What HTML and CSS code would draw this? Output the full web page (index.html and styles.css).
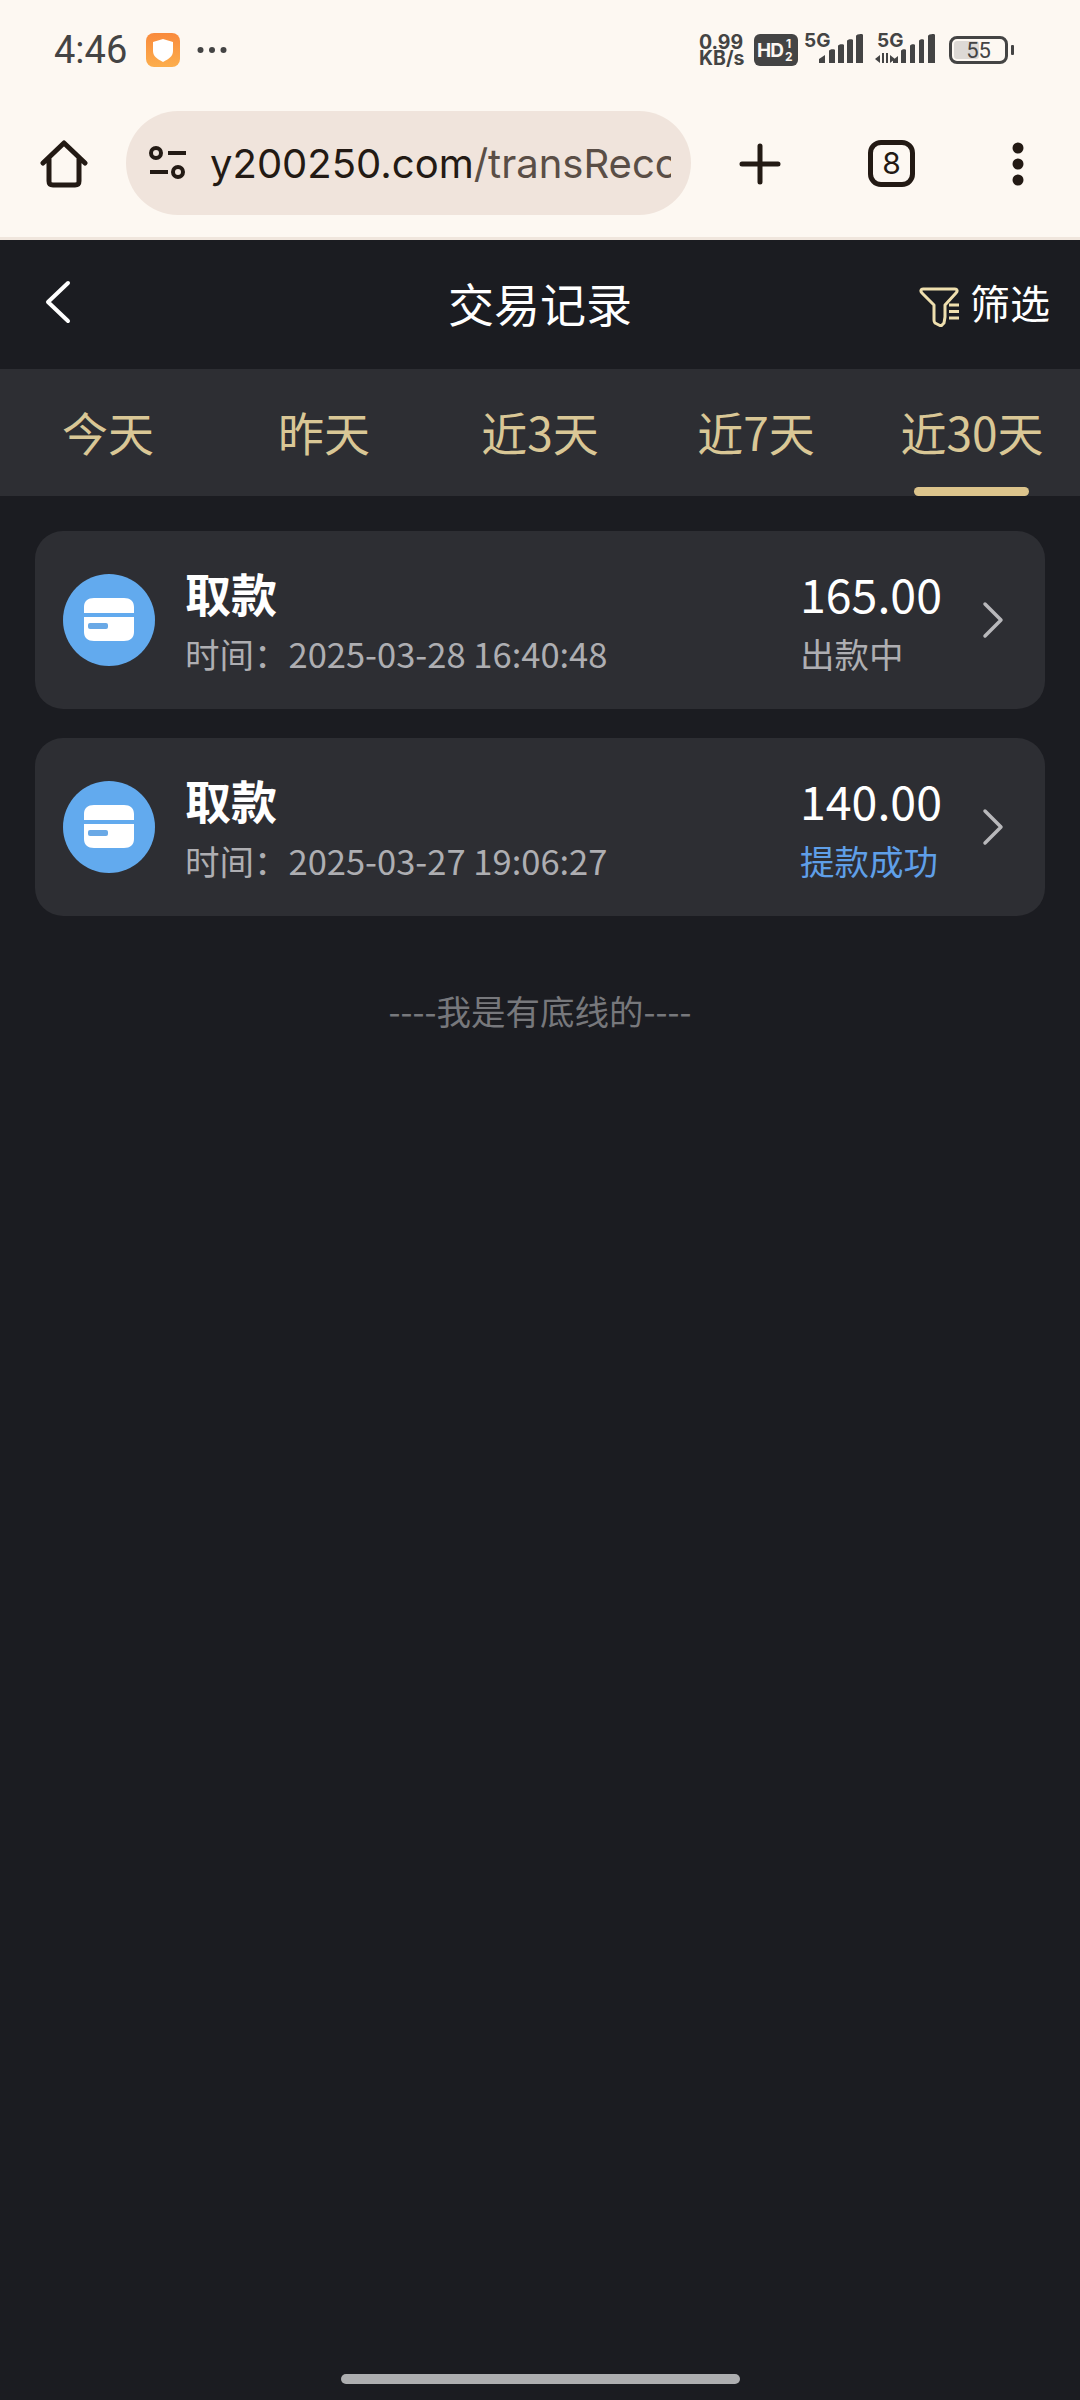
FILE: index.html
```html
<!DOCTYPE html>
<html>
<head lang="zh-CN">
	<meta charset="UTF-8">
	<title>交易记录</title>
	<link rel="stylesheet" href="styles.css">
</head>
<body>
	<div class="page">
		<div class="browser">
			<div class="status-bar">
				<span class="clock">4:46</span>
				<svg class="app-badge" viewBox="0 0 34 34">
					<defs>
						<linearGradient id="badgeFill" x1="0" y1="0" x2="0" y2="1">
							<stop offset="0" stop-color="#f98a3c"/>
							<stop offset="1" stop-color="#fcae4d"/>
						</linearGradient>
					</defs>
					<rect width="34" height="34" rx="8" fill="url(#badgeFill)"/>
					<path d="M17 6l10 3v9c0 5-4 8-10 11C11 26 7 23 7 18V9z" fill="#fff"/>
				</svg>
				<svg class="more-dots" viewBox="0 0 30 8">
					<circle cx="3.500" cy="4" r="3" fill="#444"/>
					<circle cx="15" cy="4" r="3" fill="#444"/>
					<circle cx="26.500" cy="4" r="3" fill="#444"/>
				</svg>
				<div class="status-right">
					<div class="net-speed">0.99<br>KB/s</div>
					<div class="hd-badge">HD<span class="hd-nums">1<br>2</span></div>
					<svg class="signal" viewBox="0 0 60 32">
						<text x="0" y="15" class="signal-text">5G</text>
						<path d="M15 31v-4l6-4v8zM25 31V19c0-2 6-2 6-1v13zM34 31V14c0-2 6-2 6-1v18zM43 31V9c0-2 6-2 6-1v23zM52 31V4c0-2 7-3 7-1v28z" fill="#444"/>
					</svg>
					<svg class="signal signal-data" viewBox="0 0 62 32">
						<text x="2" y="15" class="signal-text">5G</text>
						<path d="M5 23v8l-5-4zM7 21h2v10H7zM11 21h2v10h-2zM15 23l5 4-5 4zM18 31v-3l5-4v7zM26 31V19c0-2 5-2 5-1v13zM35 31V14c0-2 5-2 5-1v18zM44 31V9c0-2 5-2 5-1v23zM53 31V4c0-2 7-3 7-1v28z" fill="#444"/>
					</svg>
					<div class="battery">
						<div class="battery-body">
							<div class="battery-fill"></div>
							<span class="battery-num">55</span>
						</div>
						<div class="battery-nub"></div>
					</div>
				</div>
			</div>
			<div class="toolbar">
				<svg class="home-icon" viewBox="0 0 48 48">
					<path d="M3 23L24 3l21 20M9 19v22c0 3 1 4 4 4h22c3 0 4-1 4-4V19" fill="none" stroke="#231a14" stroke-width="5" stroke-linecap="round" stroke-linejoin="round"/>
				</svg>
				<div class="url-pill">
					<svg class="site-icon" viewBox="0 0 40 34">
						<circle cx="8" cy="7" r="5" fill="none" stroke="#231a14" stroke-width="4"/>
						<circle cx="30" cy="26" r="5" fill="none" stroke="#231a14" stroke-width="4"/>
						<path d="M20 7h18M2 26h18" stroke="#231a14" stroke-width="4"/>
					</svg>
					<div class="url-text"><span class="url-host">y200250.com</span>/transRecord</div>
				</div>
				<svg class="plus-icon" viewBox="0 0 42 42">
					<path d="M3 21h36M21 3v36" stroke="#231a14" stroke-width="5" stroke-linecap="round"/>
				</svg>
				<div class="tab-count">8</div>
				<svg class="menu-icon" viewBox="0 0 12 44">
					<circle cx="6" cy="6" r="5.500" fill="#231a14"/>
					<circle cx="6" cy="22" r="5.500" fill="#231a14"/>
					<circle cx="6" cy="38" r="5.500" fill="#231a14"/>
				</svg>
			</div>
		</div>

		<div class="header">
			<svg class="back-icon" viewBox="0 0 26 44">
				<path d="M23 3L3 22l20 19" fill="none" stroke="#fff" stroke-width="4" stroke-linecap="round" stroke-linejoin="round"/>
			</svg>
			<div class="header-title">交易记录</div>
			<div class="filter-btn">
				<svg class="filter-icon" viewBox="0 0 40 40">
					<path d="M4 2h32c2 0 3 2 1 4L26 18v12l-1 6-3 3-6-3c-1-1-1-1-1-3V18L3 6C1 4 2 2 4 2z" fill="none" stroke="#efdfae" stroke-width="3" stroke-linejoin="round"/>
					<path d="M30 18h10M30 24.500h10M30 31h10" stroke="#efdfae" stroke-width="3"/>
				</svg>
				<span>筛选</span>
			</div>
		</div>

		<ul class="tabs">
			<li class="tab">今天</li>
			<li class="tab">昨天</li>
			<li class="tab">近3天</li>
			<li class="tab">近7天</li>
			<li class="tab selected">近30天</li>
		</ul>

		<div class="content">
			<div class="card">
				<svg class="card-icon" viewBox="0 0 92 92">
					<circle cx="46" cy="46" r="46" fill="#62aaee"/>
					<path d="M21 39v-6c0-6 4-9 10-9h30c6 0 10 3 10 9v6zM21 43h50v15c0 6-4 9-10 9H31c-6 0-10-3-10-9z" fill="#fff"/>
					<rect x="25" y="49" width="20" height="6" rx="2" fill="#6aa9e6"/>
				</svg>
				<div class="card-info">
					<div class="card-title">取款</div>
					<div class="card-time">时间&#xFF1A;2025-03-28 16:40:48</div>
				</div>
				<div class="card-money">
					<div class="card-amount">165.00</div>
					<div class="card-state">出款中</div>
				</div>
				<svg class="card-arrow" viewBox="0 0 22 38">
					<path d="M3 3l16 16L3 35" fill="none" stroke="#b8b8bb" stroke-width="3.500" stroke-linecap="round" stroke-linejoin="round"/>
				</svg>
			</div>
			<div class="card">
				<svg class="card-icon" viewBox="0 0 92 92">
					<circle cx="46" cy="46" r="46" fill="#62aaee"/>
					<path d="M21 39v-6c0-6 4-9 10-9h30c6 0 10 3 10 9v6zM21 43h50v15c0 6-4 9-10 9H31c-6 0-10-3-10-9z" fill="#fff"/>
					<rect x="25" y="49" width="20" height="6" rx="2" fill="#6aa9e6"/>
				</svg>
				<div class="card-info">
					<div class="card-title">取款</div>
					<div class="card-time">时间&#xFF1A;2025-03-27 19:06:27</div>
				</div>
				<div class="card-money">
					<div class="card-amount">140.00</div>
					<div class="card-state success">提款成功</div>
				</div>
				<svg class="card-arrow" viewBox="0 0 22 38">
					<path d="M3 3l16 16L3 35" fill="none" stroke="#b8b8bb" stroke-width="3.500" stroke-linecap="round" stroke-linejoin="round"/>
				</svg>
			</div>
			<div class="bottom-line">----我是有底线的----</div>
		</div>

		<div class="home-bar"></div>
	</div>
</body>
</html>
```

FILE: styles.css
```css
*{
	margin: 0;
	padding: 0;
	box-sizing: border-box;
}
ul{
	list-style: none;
}
body{
	background: #1b1c21;
	font-family: "Noto Sans CJK SC", "Liberation Sans", sans-serif;
}
.page{
	width: 1080px;
	height: 2400px;
	display: flex;
	flex-direction: column;
	overflow: hidden;
}

/* browser chrome */
.browser{
	height: 240px;
	background: #fdf8f2;
	border-bottom: 3px solid #f0e6dd;
	font-family: Inter, "Liberation Sans", sans-serif;
}
.status-bar{
	height: 100px;
	padding: 0 66px 0 54px;
	display: flex;
	align-items: center;
}
.clock{
	width: 92px;
	font-family: Roboto, sans-serif;
	font-size: 38px;
	font-weight: 400;
	color: #444;
}
.app-badge{
	width: 34px;
	height: 34px;
}
.more-dots{
	width: 30px;
	height: 8px;
	margin-left: 17px;
}
.status-right{
	margin-left: auto;
	display: flex;
	align-items: center;
}
.net-speed{
	width: 55px;
	font-size: 19.500px;
	font-weight: 700;
	line-height: 16px;
	color: #444;
}
.hd-badge{
	width: 44px;
	height: 32px;
	padding-left: 3px;
	background: #444;
	border-radius: 6px;
	color: #fdf8f2;
	font-size: 19px;
	font-weight: 700;
	letter-spacing: -1px;
	display: flex;
	align-items: center;
}
.hd-nums{
	margin-left: 2px;
	font-size: 12px;
	line-height: 13px;
	text-align: center;
}
.signal{
	width: 60px;
	height: 32px;
	margin: 0 0 4px 6px;
	overflow: visible;
}
.signal-data{
	width: 62px;
	margin-left: 11px;
}
.signal-text{
	font-family: Inter, sans-serif;
	font-size: 19px;
	font-weight: 700;
	fill: #444;
}
.battery{
	margin-left: 12px;
	display: flex;
	align-items: center;
}
.battery-body{
	width: 59px;
	height: 28px;
	border: 3px solid #444;
	border-radius: 8px;
	display: flex;
	align-items: center;
	justify-content: center;
	position: relative;
}
.battery-fill{
	position: absolute;
	left: 2px;
	top: 2px;
	bottom: 2px;
	width: 25px;
	background: #ddd9d5;
	border-radius: 3px;
}
.battery-num{
	position: relative;
	font-family: Roboto, sans-serif;
	font-size: 22px;
	color: #444;
}
.battery-nub{
	width: 3px;
	height: 10px;
	margin-left: 3px;
	background: #444;
	border-radius: 1px;
}
.toolbar{
	height: 137px;
	padding: 11px 0 0 40px;
	display: flex;
	align-items: flex-start;
}
.home-icon{
	width: 48px;
	height: 48px;
	margin-top: 29px;
}
.url-pill{
	width: 565px;
	height: 104px;
	margin-left: 38px;
	padding: 0 20px 0 22px;
	background: #f0e4dc;
	border-radius: 52px;
	display: flex;
	align-items: center;
}
.site-icon{
	width: 40px;
	height: 34px;
	flex: none;
}
.url-text{
	margin-left: 22px;
	flex: 1;
	overflow: hidden;
	white-space: nowrap;
	font-size: 40px;
	color: #5a4e46;
}
.url-host{
	color: #231a14;
}
.plus-icon{
	width: 42px;
	height: 42px;
	margin: 32px 0 0 48px;
}
.tab-count{
	width: 47px;
	height: 47px;
	margin: 29px 0 0 87px;
	border: 5px solid #231a14;
	border-radius: 13px;
	color: #231a14;
	font-size: 30px;
	line-height: 36px;
	text-align: center;
}
.menu-icon{
	width: 12px;
	height: 44px;
	margin: 31px 0 0 97px;
}

/* page header */
.header{
	height: 129px;
	padding: 0 30px 6px;
	display: grid;
	grid-template-columns: 1fr auto 1fr;
	align-items: center;
	color: #fff;
}
.back-icon{
	width: 26px;
	height: 44px;
	margin-left: 15px;
}
.header-title{
	font-size: 46px;
}
.filter-btn{
	justify-self: end;
	display: flex;
	align-items: center;
	font-size: 40px;
}
.filter-icon{
	width: 40px;
	height: 40px;
	margin: 10px 11px 0 0;
}
.tabs{
	height: 127px;
	background: #2d2e33;
	display: flex;
}
.tab{
	flex: 1;
	height: 127px;
	line-height: 124px;
	text-align: center;
	font-size: 46px;
	color: #d9c796;
	position: relative;
}
.tab.selected::after{
	content: "";
	position: absolute;
	left: 50%;
	bottom: 0;
	width: 115px;
	height: 9px;
	margin-left: -58px;
	background: #dcc48c;
	border-radius: 5px;
}

/* list */
.content{
	flex: 1;
	padding: 35px 35px 0;
}
.card{
	height: 178px;
	margin-bottom: 29px;
	padding: 0 41px 0 28px;
	background: #2d2e33;
	border-radius: 28px;
	display: flex;
	align-items: center;
}
.card-icon{
	width: 92px;
	height: 92px;
	flex: none;
}
.card-info{
	flex: 1;
	margin-left: 30px;
	padding-top: 2px;
}
.card-title{
	font-size: 46px;
	font-weight: 700;
	line-height: 63px;
	color: #fff;
}
.card-time{
	font-size: 34.500px;
	line-height: 58px;
	color: #aeaeb2;
}
.card-money{
	width: 182px;
	padding-top: 2px;
}
.card-amount{
	font-size: 46.500px;
	line-height: 63px;
	color: #fff;
}
.card-state{
	font-size: 34.500px;
	line-height: 58px;
	color: #aeaeb2;
}
.card-state.success{
	color: #5f9fe8;
}
.card-arrow{
	width: 22px;
	height: 38px;
	flex: none;
}
.bottom-line{
	margin-top: 61px;
	text-align: center;
	font-size: 34.500px;
	line-height: 66px;
	color: #77787c;
}
.home-bar{
	width: 399px;
	height: 10px;
	margin: 0 auto 16px;
	background: #adaeb0;
	border-radius: 5px;
}
```
